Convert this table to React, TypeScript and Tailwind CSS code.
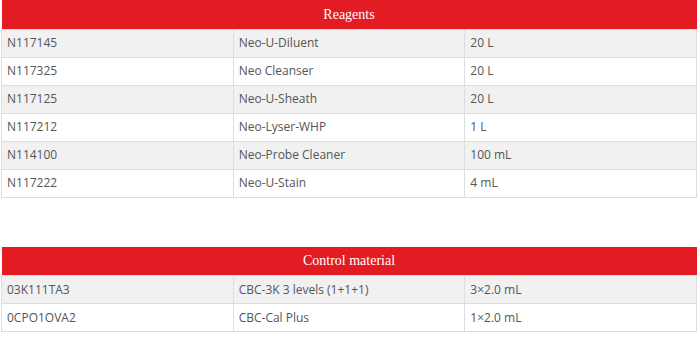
const reagents = [
  ["N117145", "Neo-U-Diluent", "20 L"],
  ["N117325", "Neo Cleanser", "20 L"],
  ["N117125", "Neo-U-Sheath", "20 L"],
  ["N117212", "Neo-Lyser-WHP", "1 L"],
  ["N114100", "Neo-Probe Cleaner", "100 mL"],
  ["N117222", "Neo-U-Stain", "4 mL"],
]

const controls = [
  ["03K111TA3", "CBC-3K 3 levels (1+1+1)", "3×2.0 mL"],
  ["0CPO1OVA2", "CBC-Cal Plus", "1×2.0 mL"],
]

function ProductTable({ title, rows }: { title: string; rows: string[][] }) {
  return (
    <table className="ml-[1px] w-[696px] table-fixed border-collapse">
      <thead>
        <tr>
          <th
            colSpan={3}
            className="h-[29px] bg-[#e31b23] text-center text-[14px] font-normal text-white"
            style={{ fontFamily: '"Liberation Serif", serif' }}
          >
            {title}
          </th>
        </tr>
      </thead>
      <tbody>
        {rows.map((row, i) => (
          <tr key={row[0]} className={i % 2 === 0 ? "bg-[#f1f1f1]" : "bg-white"}>
            {row.map((cell, j) => (
              <td
                key={j}
                className="h-[28px] border border-[#dddddd] px-[5px] text-left text-[12px] text-[#555555]"
              >
                {cell}
              </td>
            ))}
          </tr>
        ))}
      </tbody>
    </table>
  )
}

export default function App() {
  return (
    <div className="h-[342px] w-[700px] bg-white" style={{ fontFamily: '"Open Sans", sans-serif' }}>
      <ProductTable title="Reagents" rows={reagents} />
      <div className="h-[49px]" />
      <ProductTable title="Control material" rows={controls} />
    </div>
  )
}
